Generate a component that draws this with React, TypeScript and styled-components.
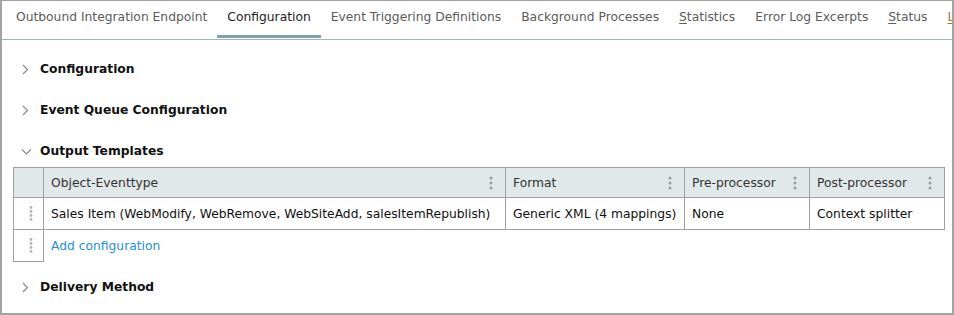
import React from "react";
import styled, { createGlobalStyle } from "styled-components";

const Global = createGlobalStyle`
  html, body { margin: 0; padding: 0; background: #fff; }
  body { font-family: "DejaVu Sans", Verdana, sans-serif; }
`;

const Frame = styled.div`
  width: 954px;
  height: 315px;
  box-sizing: border-box;
  border: 2px solid #a3a3a3;
  border-top-width: 1px;
  overflow: hidden;
  background: #fff;
  font-family: "DejaVu Sans", Verdana, sans-serif;
  font-size: 12.3px;
`;

const TabBar = styled.div`
  display: flex;
  padding: 0 0 1px 4px;
  border-bottom: 1px solid #9db8bb;
  white-space: nowrap;
`;

const Tab = styled.div<{ $active?: boolean; $tone?: string }>`
  height: 37px;
  box-sizing: border-box;
  padding: 0 10px;
  display: flex;
  align-items: center;
  padding-bottom: 3px;
  border-bottom: 3px solid ${(p) => (p.$active ? "#7ea2a7" : "transparent")};
  color: ${(p) => p.$tone ?? (p.$active ? "#1d1d1d" : "#5c5c5c")};
  flex-shrink: 0;
  u { text-decoration-thickness: 1px; text-underline-offset: 2px; }
`;

const Content = styled.div`
  display: flex;
  flex-direction: column;
  gap: 9px;
  padding: 13px 0 0 11px;
`;

const Section = styled.div`
  display: flex;
  flex-direction: column;
`;

const SectionHeader = styled.div`
  height: 32px;
  display: flex;
  align-items: center;
  font-weight: bold;
  color: #111;
`;

const ChevronBox = styled.span`
  width: 27px;
  padding-left: 8px;
  box-sizing: border-box;
  display: flex;
  align-items: center;
`;

const Table = styled.div`
  display: grid;
  grid-template-columns: 30px 462px 179px 125px 135px;
  width: 932px;
  box-sizing: border-box;
  border-left: 1px solid #a0a0a0;
  border-top: 1px solid #a0a0a0;
`;

const HeadCell = styled.div`
  height: 30px;
  box-sizing: border-box;
  background: #e1e8ea;
  border-right: 1px solid #a0a0a0;
  border-bottom: 1px solid #a0a0a0;
  display: flex;
  align-items: center;
  justify-content: space-between;
  padding: 0 12px 0 7px;
  color: #333;
`;

const Cell = styled.div<{ $bare?: boolean }>`
  height: 32px;
  box-sizing: border-box;
  border-right: ${(p) => (p.$bare ? "none" : "1px solid #a0a0a0")};
  border-bottom: ${(p) => (p.$bare ? "none" : "1px solid #a0a0a0")};
  display: flex;
  align-items: center;
  padding: 0 7px;
  color: #111;
  white-space: nowrap;
`;

const HandleCell = styled(Cell)`
  padding: 0 0 0 4px;
  justify-content: center;
`;

const AddCell = styled(Cell)`
  grid-column: 2 / span 4;
`;

const Link = styled.a`
  color: #2590d4;
  text-decoration: none;
  cursor: pointer;
`;

const Chevron = ({ open }: { open?: boolean }) => (
  <svg width="11" height="11" viewBox="0 0 11 11">
    {open ? (
      <path d="M1 3.5 L5.5 8 L10 3.5" fill="none" stroke="#8a8a8a" strokeWidth="1.2" />
    ) : (
      <path d="M2 1 L6.5 5.5 L2 10" fill="none" stroke="#8a8a8a" strokeWidth="1.2" />
    )}
  </svg>
);

const Kebab = () => (
  <svg width="4" height="14" viewBox="0 0 4 14">
    <circle cx="2" cy="2" r="1.5" fill="#9c9c9c" />
    <circle cx="2" cy="7" r="1.5" fill="#9c9c9c" />
    <circle cx="2" cy="12" r="1.5" fill="#9c9c9c" />
  </svg>
);

const Handle = () => (
  <svg width="4" height="15" viewBox="0 0 4 15">
    {[1.5, 5.5, 9.5, 13.5].map((y) => (
      <circle key={y} cx="2" cy={y} r="1.4" fill="#b4b4b4" />
    ))}
  </svg>
);

const tabs: { label: React.ReactNode; active?: boolean; tone?: string }[] = [
  { label: "Outbound Integration Endpoint" },
  { label: "Configuration", active: true },
  { label: "Event Triggering Definitions" },
  { label: "Background Processes" },
  { label: (<><u>S</u>tatistics</>) },
  { label: "Error Log Excerpts" },
  { label: (<><u>S</u>tatus</>) },
  { label: (<><u>L</u>og</>), tone: "#b5702f" },
];

const columns = ["Object-Eventtype", "Format", "Pre-processor", "Post-processor"];

export default function App() {
  return (
    <>
      <Global />
      <Frame>
        <TabBar>
          {tabs.map((t, i) => (
            <Tab key={i} $active={t.active} $tone={t.tone}>
              {t.label}
            </Tab>
          ))}
        </TabBar>
        <Content>
          <SectionHeader>
            <ChevronBox><Chevron /></ChevronBox>
            Configuration
          </SectionHeader>
          <SectionHeader>
            <ChevronBox><Chevron /></ChevronBox>
            Event Queue Configuration
          </SectionHeader>
          <Section>
            <SectionHeader>
              <ChevronBox><Chevron open /></ChevronBox>
              Output Templates
            </SectionHeader>
            <Table>
              <HeadCell />
              {columns.map((c) => (
                <HeadCell key={c}>
                  <span>{c}</span>
                  <Kebab />
                </HeadCell>
              ))}
              <HandleCell><Handle /></HandleCell>
              <Cell>Sales Item (WebModify, WebRemove, WebSiteAdd, salesItemRepublish)</Cell>
              <Cell>Generic XML (4 mappings)</Cell>
              <Cell>None</Cell>
              <Cell>Context splitter</Cell>
              <HandleCell><Handle /></HandleCell>
              <AddCell $bare>
                <Link>Add configuration</Link>
              </AddCell>
            </Table>
          </Section>
          <SectionHeader>
            <ChevronBox><Chevron /></ChevronBox>
            Delivery Method
          </SectionHeader>
        </Content>
      </Frame>
    </>
  );
}
